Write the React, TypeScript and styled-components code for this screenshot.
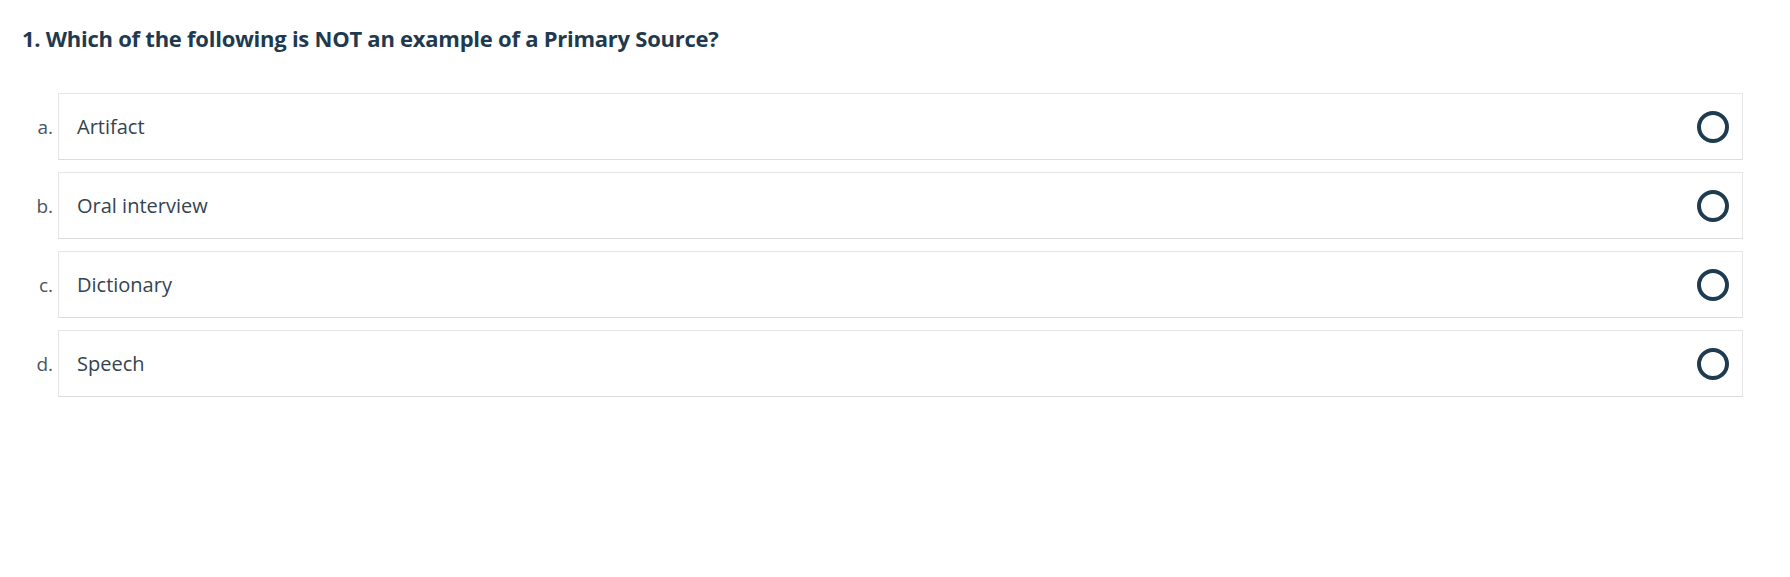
import React from 'react';
import styled, { createGlobalStyle } from 'styled-components';

const GlobalStyle = createGlobalStyle`
  body {
    margin: 0;
    background: #ffffff;
    font-family: 'Open Sans', 'Noto Sans', sans-serif;
  }
`;

interface Option {
  letter: string;
  text: string;
}

const options: Option[] = [
  { letter: 'a.', text: 'Artifact' },
  { letter: 'b.', text: 'Oral interview' },
  { letter: 'c.', text: 'Dictionary' },
  { letter: 'd.', text: 'Speech' },
];

const App: React.FC = () => (
  <>
    <GlobalStyle />
    <Page>
      <Question>1. Which of the following is NOT an example of a Primary Source?</Question>
      <OptionList>
        {options.map((o) => (
          <OptionRow key={o.letter}>
            <Letter>{o.letter}</Letter>
            <OptionBox>
              <OptionText>{o.text}</OptionText>
              <Radio />
            </OptionBox>
          </OptionRow>
        ))}
      </OptionList>
    </Page>
  </>
);

export default App;

const Page = styled.div`
  padding: 23px 47px 0 22px;
`;

const Question = styled.h2`
  margin: 0;
  color: #1f3a4f;
  font-size: 22px;
  font-weight: 700;
  line-height: 30px;
  letter-spacing: -0.25px;
`;

const OptionList = styled.div`
  display: flex;
  flex-direction: column;
  gap: 12px;
  margin-top: 40px;
`;

const OptionRow = styled.div`
  display: grid;
  grid-template-columns: 36px 1fr;
  align-items: center;
`;

const Letter = styled.span`
  text-align: right;
  padding-right: 5px;
  color: #4a5560;
  font-size: 19px;
`;

const OptionBox = styled.div`
  display: flex;
  align-items: center;
  justify-content: space-between;
  height: 67px;
  box-sizing: border-box;
  border: 1px solid #e6e6e6;
  border-bottom-color: #dcdcdc;
  padding: 0 13px 0 18px;
`;

const OptionText = styled.span`
  color: #34444f;
  font-size: 20px;
`;

const Radio = styled.span`
  width: 32px;
  height: 32px;
  box-sizing: border-box;
  border: 4px solid #1e3b50;
  border-radius: 50%;
`;
